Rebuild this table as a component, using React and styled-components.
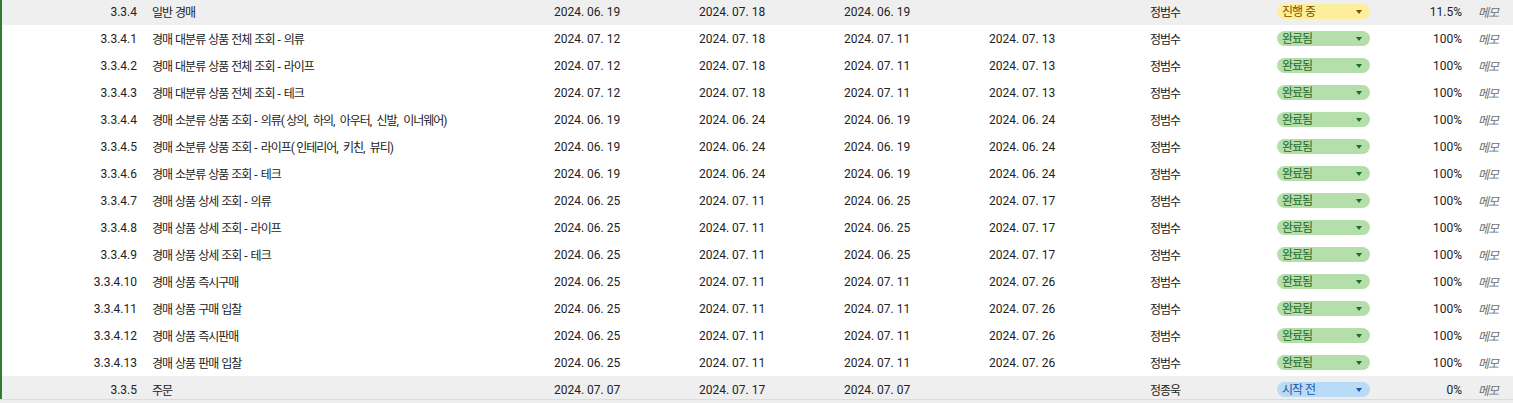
import React from "react";
import styled, { createGlobalStyle } from "styled-components";

const Global = createGlobalStyle`
  html, body { margin: 0; padding: 0; background: #ffffff; }
  body { font-family: Roboto, "Noto Sans CJK KR", "Noto Sans", sans-serif; }
`;

const Sheet = styled.div`
  position: relative;
  width: 1513px;
  height: 403px;
  overflow: hidden;
  background: #ffffff;
`;

const Table = styled.div`
  display: flex;
  flex-direction: column;
  margin-top: -2px;
  border-left: 2px solid #2e7d32;
`;

const Row = styled.div`
  display: grid;
  grid-template-columns: 143px 402px 145px 145px 145px 145px 145px 103px 95px 43px;
  height: 27px;
  align-items: center;
  background: ${(p) => (p.$parent ? "#efefef" : "#ffffff")};
  color: #222222;
  font-size: 12px;
  white-space: nowrap;
`;

const Hangul = styled.span`
  letter-spacing: -1px;
`;

const Punct = styled.span`
  letter-spacing: 1.3px;
`;

const Num = styled.div`
  text-align: right;
  padding-right: 8px;
`;

const Name = styled.div`
  padding-left: 7px;
  overflow: hidden;
`;

const DateCell = styled.div`
  padding-left: 7px;
`;

const Person = styled.div`
  padding-left: 23px;
`;

const StatusCell = styled.div`
  padding-left: 5px;
  display: flex;
  align-items: center;
`;

const palette = {
  doing: { bg: "#fdee9c", fg: "#7b4f00" },
  done: { bg: "#b4dfaa", fg: "#1e6a2c" },
  todo: { bg: "#b8dcf8", fg: "#1b55a3" },
};

const Chip = styled.div`
  width: 93px;
  height: 15px;
  box-sizing: border-box;
  border-radius: 8px;
  padding: 1px 5px 0 5px;
  display: flex;
  align-items: center;
  justify-content: space-between;
  background: ${(p) => palette[p.$kind].bg};
  color: ${(p) => palette[p.$kind].fg};
  font-size: 12px;
  line-height: 14px;
`;

const Caret = styled.span`
  width: 0;
  height: 0;
  border-left: 3.5px solid transparent;
  border-right: 3.5px solid transparent;
  border-top: 4px solid currentColor;
  margin-right: 3px;
`;

const Percent = styled.div`
  text-align: right;
  padding-right: 8px;
`;

const Memo = styled.div`
  padding-left: 8px;
  font-style: italic;
  color: #6f6f6f;
`;

const Scroll = styled.div`
  position: absolute;
  left: 0;
  right: 0;
  bottom: 0;
  height: 3px;
  background: #eeeeee;
  border-top: 1px solid #dcdcdc;
`;

function Txt({ children }) {
  const parts = String(children).split(/([\uAC00-\uD7A3]+|[,()]+)/);
  return parts.map((p, i) => {
    if (/[\uAC00-\uD7A3]/.test(p)) return <Hangul key={i}>{p}</Hangul>;
    if (/^[,()]+$/.test(p)) return <Punct key={i}>{p}</Punct>;
    return p;
  });
}

const rows = [
  { n: "3.3.4", name: "일반 경매", d: ["2024. 06. 19", "2024. 07. 18", "2024. 06. 19", ""], p: "정범수", s: "doing", label: "진행 중", pct: "11.5%", parent: true },
  { n: "3.3.4.1", name: "경매 대분류 상품 전체 조회 - 의류", d: ["2024. 07. 12", "2024. 07. 18", "2024. 07. 11", "2024. 07. 13"] },
  { n: "3.3.4.2", name: "경매 대분류 상품 전체 조회 - 라이프", d: ["2024. 07. 12", "2024. 07. 18", "2024. 07. 11", "2024. 07. 13"] },
  { n: "3.3.4.3", name: "경매 대분류 상품 전체 조회 - 테크", d: ["2024. 07. 12", "2024. 07. 18", "2024. 07. 11", "2024. 07. 13"] },
  { n: "3.3.4.4", name: "경매 소분류 상품 조회 - 의류(상의, 하의, 아우터, 신발, 이너웨어)", d: ["2024. 06. 19", "2024. 06. 24", "2024. 06. 19", "2024. 06. 24"] },
  { n: "3.3.4.5", name: "경매 소분류 상품 조회 - 라이프(인테리어, 키친, 뷰티)", d: ["2024. 06. 19", "2024. 06. 24", "2024. 06. 19", "2024. 06. 24"] },
  { n: "3.3.4.6", name: "경매 소분류 상품 조회 - 테크", d: ["2024. 06. 19", "2024. 06. 24", "2024. 06. 19", "2024. 06. 24"] },
  { n: "3.3.4.7", name: "경매 상품 상세 조회 - 의류", d: ["2024. 06. 25", "2024. 07. 11", "2024. 06. 25", "2024. 07. 17"] },
  { n: "3.3.4.8", name: "경매 상품 상세 조회 - 라이프", d: ["2024. 06. 25", "2024. 07. 11", "2024. 06. 25", "2024. 07. 17"] },
  { n: "3.3.4.9", name: "경매 상품 상세 조회 - 테크", d: ["2024. 06. 25", "2024. 07. 11", "2024. 06. 25", "2024. 07. 17"] },
  { n: "3.3.4.10", name: "경매 상품 즉시구매", d: ["2024. 06. 25", "2024. 07. 11", "2024. 07. 11", "2024. 07. 26"] },
  { n: "3.3.4.11", name: "경매 상품 구매 입찰", d: ["2024. 06. 25", "2024. 07. 11", "2024. 07. 11", "2024. 07. 26"] },
  { n: "3.3.4.12", name: "경매 상품 즉시판매", d: ["2024. 06. 25", "2024. 07. 11", "2024. 07. 11", "2024. 07. 26"] },
  { n: "3.3.4.13", name: "경매 상품 판매 입찰", d: ["2024. 06. 25", "2024. 07. 11", "2024. 07. 11", "2024. 07. 26"] },
  { n: "3.3.5", name: "주문", d: ["2024. 07. 07", "2024. 07. 17", "2024. 07. 07", ""], p: "정종욱", s: "todo", label: "시작 전", pct: "0%", parent: true },
];

export default function App() {
  return (
    <>
      <Global />
      <Sheet>
        <Table>
          {rows.map((r) => {
            const kind = r.s || "done";
            return (
              <Row key={r.n} $parent={r.parent}>
                <Num>{r.n}</Num>
                <Name><Txt>{r.name}</Txt></Name>
                {r.d.map((d, i) => (
                  <DateCell key={i}>{d}</DateCell>
                ))}
                <Person><Txt>{r.p || "정범수"}</Txt></Person>
                <StatusCell>
                  <Chip $kind={kind}>
                    <span><Txt>{r.label || "완료됨"}</Txt></span>
                    <Caret />
                  </Chip>
                </StatusCell>
                <Percent>{r.pct || "100%"}</Percent>
                <Memo><Txt>메모</Txt></Memo>
              </Row>
            );
          })}
        </Table>
        <Scroll />
      </Sheet>
    </>
  );
}
